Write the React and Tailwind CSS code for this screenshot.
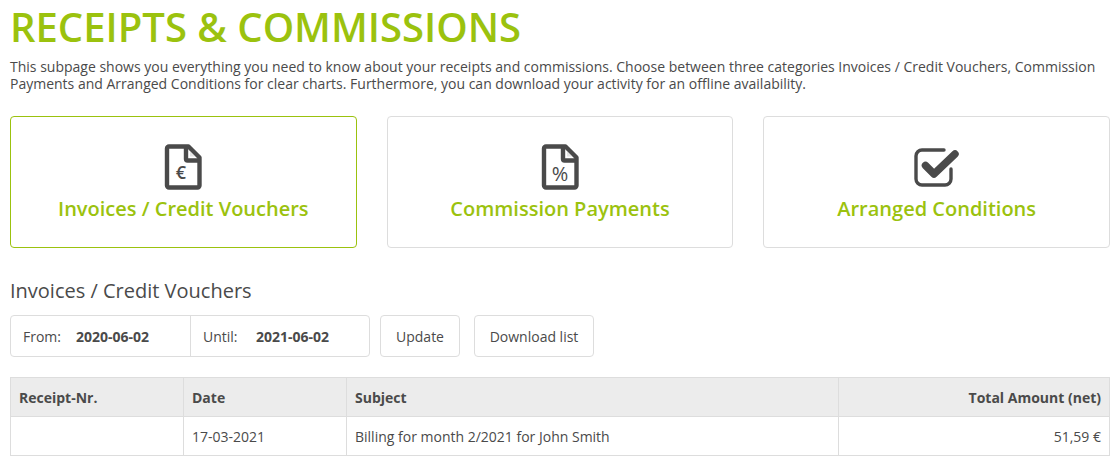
import React from 'react';

const font = { fontFamily: '"Open Sans", sans-serif' };

function DocIcon({ sign }) {
  return (
    <svg width="38" height="46" viewBox="0 0 38 46" fill="none">
      <path d="M5 2.5H24.5L35.5 13.5V41.5C35.5 42.6 34.6 43.5 33.5 43.5H5C3.9 43.5 3 42.6 3 41.5V4.5C3 3.4 3.9 2.5 5 2.5Z" stroke="#4a4a4a" strokeWidth="4.4" strokeLinejoin="round" />
      <path d="M22 3V15C22 16 22.6 16.5 23.5 16.5H35" stroke="#4a4a4a" strokeWidth="4.4" />
      <path d="M26 7.5L31 12.5H26Z" fill="#e4e4e4" />
      <text x={sign === '%' ? 19 : 17} y={sign === '%' ? 37 : 35} textAnchor="middle" fill="#4a4a4a" fontSize={sign === '%' ? 20 : 18} fontFamily="Open Sans, sans-serif" fontWeight={sign === '%' ? 400 : 600}>{sign}</text>
    </svg>
  );
}

function CheckIcon() {
  return (
    <svg width="46" height="40" viewBox="0 0 46 40" fill="none">
      <path d="M30 3H8C4.7 3 2 5.7 2 9V32C2 35.3 4.7 38 8 38H31C34.3 38 37 35.3 37 32V22" stroke="#4a4a4a" strokeWidth="3.4" strokeLinecap="round" />
      <path d="M11.5 18.5L20 27L41 7" stroke="#4a4a4a" strokeWidth="7.5" strokeLinecap="round" strokeLinejoin="round" />
    </svg>
  );
}

const cards = [
  { label: 'Invoices / Credit Vouchers', icon: <DocIcon sign="€" />, active: true },
  { label: 'Commission Payments', icon: <DocIcon sign="%" /> },
  { label: 'Arranged Conditions', icon: <CheckIcon /> },
];

export default function App() {
  return (
    <div className="w-[1118px] h-[465px] overflow-hidden bg-white pl-[10px] pr-[8px] text-[#4a4a4a]" style={font}>
      <h1 className="text-[40px] leading-[53px] font-semibold text-[#9bc20e] uppercase">Receipts &amp; Commissions</h1>
      <p className="mt-[5px] text-[14px] leading-[17px]">
        This subpage shows you everything you need to know about your receipts and commissions. Choose between three categories Invoices / Credit Vouchers, Commission Payments and Arranged Conditions for clear charts. Furthermore, you can download your activity for an offline availability.
      </p>

      <div className="mt-[24px] grid grid-cols-3 gap-[30px]">
        {cards.map((c) => (
          <div
            key={c.label}
            className={`h-[132px] rounded border flex flex-col items-center pt-[27px] ${c.active ? 'border-[#9bc20e]' : 'border-[#dddddd]'}`}
          >
            <div className="h-[46px] flex items-center justify-center">{c.icon}</div>
            <div className="mt-[5px] text-[20px] leading-[27px] font-semibold text-[#9bc20e]">{c.label}</div>
          </div>
        ))}
      </div>

      <h2 className="mt-[29px] text-[20px] leading-[27px]">Invoices / Credit Vouchers</h2>

      <div className="mt-[11px] flex items-stretch h-[42px] text-[14px]">
        <div className="flex w-[360px] rounded border border-[#dddddd]">
          <div className="w-[180px] flex items-center pl-[12px] border-r border-[#dddddd]">
            <span className="w-[53px]">From:</span>
            <span className="font-bold">2020-06-02</span>
          </div>
          <div className="flex-1 flex items-center pl-[12px]">
            <span className="w-[53px]">Until:</span>
            <span className="font-bold">2021-06-02</span>
          </div>
        </div>
        <button className="ml-[10px] w-[80px] rounded border border-[#dddddd]">Update</button>
        <button className="ml-[14px] w-[120px] rounded border border-[#dddddd]">Download list</button>
      </div>

      <table className="mt-[20px] w-[1100px] table-fixed border-collapse text-[14px]">
        <colgroup>
          <col className="w-[173px]" />
          <col className="w-[163px]" />
          <col className="w-[492px]" />
          <col />
        </colgroup>
        <thead>
          <tr className="h-[39px] bg-[#ececec] font-bold">
            <th className="border border-[#dddddd] px-[8px] text-left">Receipt-Nr.</th>
            <th className="border border-[#dddddd] px-[8px] text-left">Date</th>
            <th className="border border-[#dddddd] px-[8px] text-left">Subject</th>
            <th className="border border-[#dddddd] px-[8px] text-right">Total Amount (net)</th>
          </tr>
        </thead>
        <tbody>
          <tr className="h-[39px]">
            <td className="border border-[#dddddd] px-[8px]"></td>
            <td className="border border-[#dddddd] px-[8px]">17-03-2021</td>
            <td className="border border-[#dddddd] px-[8px]">Billing for month 2/2021 for John Smith</td>
            <td className="border border-[#dddddd] px-[8px] text-right">51,59 €</td>
          </tr>
        </tbody>
      </table>
    </div>
  );
}
